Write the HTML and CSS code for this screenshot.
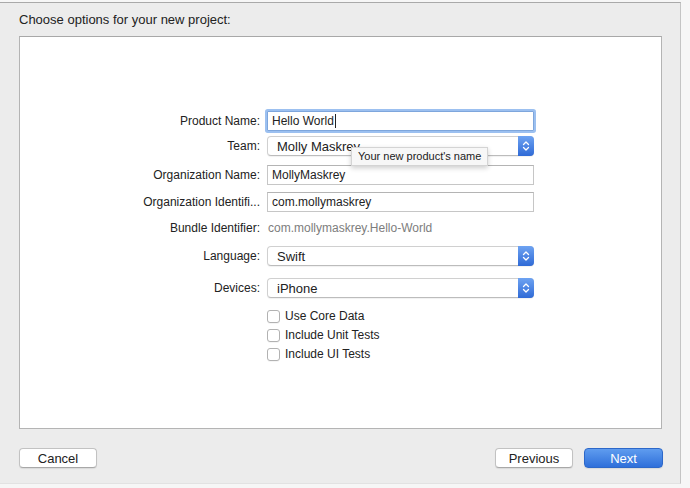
FILE: index.html
```html
<!DOCTYPE html>
<html>
<head>
<meta charset="utf-8">
<link rel="stylesheet" href="styles.css">
</head>
<body>
<div class="window">
  <div class="title">Choose options for your new project:</div>
  <div class="panel">
    <div class="form">
      <div class="row r1">
        <label>Product Name:</label>
        <div class="field focus">Hello World<span class="caret"></span></div>
      </div>
      <div class="row r2">
        <label>Team:</label>
        <div class="popup">
          <span class="pv">Molly Maskrey</span>
          <span class="stepper"><svg width="8" height="12" viewBox="0 0 8 12"><path d="M1.5 4.5 L4 2 L6.5 4.5 M1.5 7.5 L4 10 L6.5 7.5" fill="none" stroke="#fff" stroke-width="1.3" stroke-linecap="round" stroke-linejoin="round"/></svg></span>
          <div class="tooltip">Your new product's name</div>
        </div>
      </div>
      <div class="row r3">
        <label>Organization Name:</label>
        <div class="field">MollyMaskrey</div>
      </div>
      <div class="row r4">
        <label>Organization Identifi...</label>
        <div class="field">com.mollymaskrey</div>
      </div>
      <div class="row r5">
        <label>Bundle Identifier:</label>
        <div class="static">com.mollymaskrey.Hello-World</div>
      </div>
      <div class="row r6">
        <label>Language:</label>
        <div class="popup">
          <span class="pv">Swift</span>
          <span class="stepper"><svg width="8" height="12" viewBox="0 0 8 12"><path d="M1.5 4.5 L4 2 L6.5 4.5 M1.5 7.5 L4 10 L6.5 7.5" fill="none" stroke="#fff" stroke-width="1.3" stroke-linecap="round" stroke-linejoin="round"/></svg></span>
        </div>
      </div>
      <div class="row r7">
        <label>Devices:</label>
        <div class="popup">
          <span class="pv">iPhone</span>
          <span class="stepper"><svg width="8" height="12" viewBox="0 0 8 12"><path d="M1.5 4.5 L4 2 L6.5 4.5 M1.5 7.5 L4 10 L6.5 7.5" fill="none" stroke="#fff" stroke-width="1.3" stroke-linecap="round" stroke-linejoin="round"/></svg></span>
        </div>
      </div>
      <div class="row check c1"><span></span><div class="cb"><span class="box"></span>Use Core Data</div></div>
      <div class="row check c2"><span></span><div class="cb"><span class="box"></span>Include Unit Tests</div></div>
      <div class="row check c3"><span></span><div class="cb"><span class="box"></span>Include UI Tests</div></div>
    </div>
  </div>
  <div class="footer">
    <button class="btn">Cancel</button>
    <div class="right">
      <button class="btn">Previous</button>
      <button class="btn primary">Next</button>
    </div>
  </div>
</div>
</body>
</html>
```
FILE: styles.css
```css
html, body {
  margin: 0;
  padding: 0;
  background: #f6f6f6;
  font-family: "Liberation Sans", Arial, sans-serif;
  color: #222;
}
.window {
  margin-top: 2px;
  width: 680px;
  height: 480px;
  background: #ececec;
  border-top: 1px solid #a9a9a9;
  border-right: 1px solid #c4c4c4;
  border-bottom: 1px solid #e2e2e2;
  display: flex;
  flex-direction: column;
}
.title {
  font-size: 13px;
  line-height: 16px;
  margin: 9px 0 0 19px;
  height: 16px;
}
.panel {
  margin: 8px 0 0 19px;
  width: 641px;
  height: 391px;
  background: #fff;
  border: 1px solid #b4b4b4;
  border-top-color: #a8a8a8;
}
.form {
  display: flex;
  flex-direction: column;
  padding-top: 74px;
}
.row {
  display: grid;
  grid-template-columns: 240px 267px;
  column-gap: 7px;
  align-items: center;
  height: 20px;
}
.row label {
  text-align: right;
  font-size: 12px;
  color: #222;
  white-space: nowrap;
}
.r2 { margin-top: 5px; }
.r3 { margin-top: 9px; }
.r4 { margin-top: 7px; }
.r5 { margin-top: 7px; height: 18px; }
.r6 { margin-top: 9px; }
.r7 { margin-top: 12px; }
.c1 { margin-top: 10px; height: 16px; }
.c2 { margin-top: 3px; height: 16px; }
.c3 { margin-top: 3px; height: 16px; }

.field {
  box-sizing: border-box;
  height: 20px;
  border: 1px solid #c6c6c6;
  border-top-color: #b4b4b4;
  background: #fff;
  font-size: 12px;
  line-height: 18px;
  padding-left: 4px;
  display: flex;
  align-items: center;
}
.field.focus {
  border-color: #7ea6dc;
  box-shadow: 0 0 0 2px #9cc0f0;
  border-radius: 1px;
}
.caret {
  display: inline-block;
  width: 1px;
  height: 14px;
  background: #222;
  margin-left: 1px;
}
.static {
  font-size: 12px;
  color: #7d7d7d;
  padding-left: 1px;
}
.popup {
  position: relative;
  box-sizing: border-box;
  height: 20px;
  border: 1px solid #d0d0d0;
  border-bottom-color: #bcbcbc;
  border-radius: 4px;
  background: #fff;
  box-shadow: 0 1px 1px rgba(0,0,0,0.06);
  display: flex;
  align-items: center;
  justify-content: space-between;
}
.pv {
  font-size: 13px;
  padding-left: 9px;
  color: #222;
}
.stepper {
  width: 16px;
  height: 20px;
  margin: -1px -1px -1px 0;
  border-radius: 0 4px 4px 0;
  background: linear-gradient(#6ea3f2, #2f6ad6);
  display: flex;
  align-items: center;
  justify-content: center;
}
.tooltip {
  position: absolute;
  left: 83px;
  top: 10px;
  box-sizing: border-box;
  width: 137px;
  height: 19px;
  padding-left: 6px;
  font-size: 11px;
  line-height: 17px;
  color: #222;
  background: #f7f7f7;
  border: 1px solid #d4d4d4;
  box-shadow: 0 2px 5px rgba(0,0,0,0.2);
  white-space: nowrap;
}
.cb {
  display: flex;
  align-items: center;
  font-size: 12px;
  color: #222;
}
.box {
  box-sizing: border-box;
  width: 13px;
  height: 13px;
  border: 1px solid #b2b2b2;
  border-radius: 3px;
  background: #fff;
  margin-right: 5px;
  box-shadow: 0 1px 0 rgba(0,0,0,0.04);
}
.footer {
  display: flex;
  justify-content: space-between;
  padding: 19px 17px 0 19px;
}
.right {
  display: flex;
  gap: 11px;
}
.btn {
  box-sizing: border-box;
  width: 78px;
  height: 20px;
  border: 1px solid #c2c2c2;
  border-bottom-color: #a8a8a8;
  border-radius: 4px;
  background: #fff;
  font-family: "Liberation Sans", Arial, sans-serif;
  font-size: 13px;
  color: #222;
  padding: 0;
  box-shadow: 0 1px 1px rgba(0,0,0,0.08);
}
.btn.primary {
  width: 79px;
  color: #fff;
  border-color: #2d68c9;
  background: linear-gradient(#5f9cef, #2f6fda);
}
```
